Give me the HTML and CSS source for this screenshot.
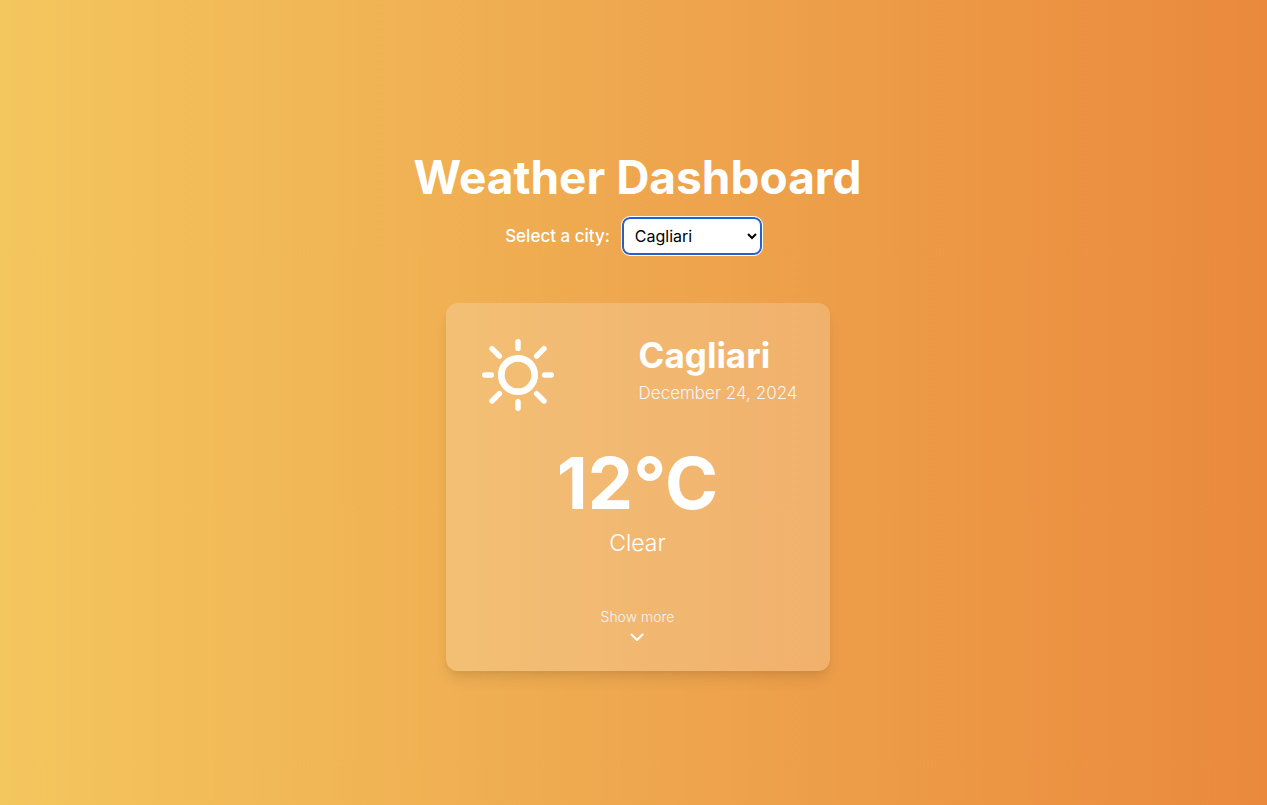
FILE: index.html
```
<!DOCTYPE html>
<html lang="en">
<head>
<meta charset="utf-8">
<meta name="viewport" content="width=device-width, initial-scale=1">
<title>Weather Dashboard</title>
<link rel="stylesheet" href="styles.css">
</head>
<body>
<main class="page">
  <h1 class="title">Weather Dashboard</h1>
  <div class="picker">
    <label class="picker-label" for="city">Select a city:</label>
    <select class="picker-select" id="city">
      <option>Cagliari</option>
      <option>Copenhagen</option>
    </select>
  </div>
  <section class="card">
    <div class="card-top">
      <svg class="sun" viewBox="-40 -40 80 80" aria-hidden="true">
        <circle r="16.7" stroke-width="6.7"/>
        <path stroke-width="5.4" d="M0-33.3v6.7M0 26.6v6.7M-33.3 0h6.7M26.6 0h6.7M-26-26.3l7.4 7.4M26-26.3l-7.4 7.4M-26 26l7.4-7.4M26 26l-7.4-7.4"/>
      </svg>
      <div class="place">
        <h2 class="city">Cagliari</h2>
        <p class="date">December 24, 2024</p>
      </div>
    </div>
    <div class="reading">
      <p class="temp">12°C</p>
      <p class="condition">Clear</p>
    </div>
    <button class="more" type="button">
      <span>Show more</span>
      <svg class="chevron" viewBox="0 0 20 20" aria-hidden="true"><path d="M4.500 7.500L10 13l5.500-5.500"/></svg>
    </button>
  </section>
</main>
</body>
</html>
```
FILE: styles.css
```
* { box-sizing: border-box; }
body, h1, h2, p { margin: 0; }
body {
  font-family: Inter, "Liberation Sans", sans-serif;
  color: #fff;
  background: linear-gradient(to right, #f4c65e, #efaa50 45%, #ea893c);
}
.page {
  min-height: 100vh;
  display: flex;
  flex-direction: column;
  align-items: center;
  justify-content: center;
  padding: 22px 0 4px 8px;
}
.title {
  font-size: 46px;
  line-height: 48px;
  font-weight: 700;
  margin-bottom: 16px;
}
.picker {
  display: flex;
  align-items: center;
  gap: 12px;
  margin: 0 8px 48px 0;
}
.picker-label { font-size: 17px; line-height: 28px; font-weight: 500; }
.picker-select {
  width: 140px;
  height: 38px;
  padding: 0 7px;
  border: 2px solid #2460cf;
  border-radius: 8px;
  outline: 1px solid #fff;
  background-color: #fff;
  color: #000;
  font: 400 16px/20px Inter, "Liberation Sans", sans-serif;
}
.card {
  width: 384px;
  max-width: 100%;
  padding: 32px 32px 24px;
  border-radius: 12px;
  background: rgba(255, 255, 255, 0.2);
  box-shadow: 0 10px 15px -3px rgba(0, 0, 0, 0.1), 0 4px 6px -2px rgba(0, 0, 0, 0.05);
}
.card-top {
  display: flex;
  justify-content: space-between;
  align-items: flex-start;
  margin-bottom: 32px;
}
.sun { width: 80px; height: 80px; fill: none; stroke: #fff; stroke-linecap: round; }
.city { font-size: 35px; line-height: 40px; font-weight: 700; margin-bottom: 4px; }
.date { font-size: 17px; line-height: 28px; font-weight: 300; color: #f3f4f6; }
.reading { text-align: center; margin-bottom: 48px; }
.temp { font-size: 72px; line-height: 72px; font-weight: 700; margin-bottom: 8px; }
.condition { font-size: 23px; line-height: 32px; font-weight: 300; }
.more {
  display: flex;
  flex-direction: column;
  align-items: center;
  margin: 0 auto;
  padding: 0;
  border: 0;
  background: none;
  color: #f3f4f6;
  font: 300 14px/20px Inter, "Liberation Sans", sans-serif;
  cursor: pointer;
}
.chevron { width: 20px; height: 20px; fill: none; stroke: #fff; stroke-width: 2; stroke-linecap: round; stroke-linejoin: round; }
```
